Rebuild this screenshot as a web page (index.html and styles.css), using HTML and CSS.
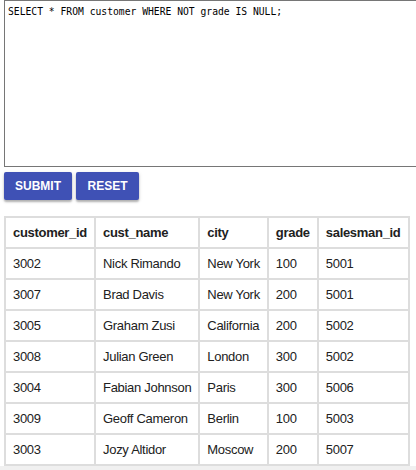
FILE: index.html
```html
<!DOCTYPE html>
<html>
<head>
<meta charset="utf-8">
<link rel="stylesheet" href="styles.css">
</head>
<body>
<div class="page">
  <textarea class="editor" spellcheck="false">SELECT * FROM customer WHERE NOT grade IS NULL;</textarea>
  <div class="actions">
    <button class="btn">SUBMIT</button>
    <button class="btn">RESET</button>
  </div>
  <div class="result">
    <table class="grid">
      <thead>
        <tr><th>customer_id</th><th>cust_name</th><th>city</th><th>grade</th><th>salesman_id</th></tr>
      </thead>
      <tbody>
        <tr><td>3002</td><td>Nick Rimando</td><td>New York</td><td>100</td><td>5001</td></tr>
        <tr><td>3007</td><td>Brad Davis</td><td>New York</td><td>200</td><td>5001</td></tr>
        <tr><td>3005</td><td>Graham Zusi</td><td>California</td><td>200</td><td>5002</td></tr>
        <tr><td>3008</td><td>Julian Green</td><td>London</td><td>300</td><td>5002</td></tr>
        <tr><td>3004</td><td>Fabian Johnson</td><td>Paris</td><td>300</td><td>5006</td></tr>
        <tr><td>3009</td><td>Geoff Cameron</td><td>Berlin</td><td>100</td><td>5003</td></tr>
        <tr><td>3003</td><td>Jozy Altidor</td><td>Moscow</td><td>200</td><td>5007</td></tr>
      </tbody>
    </table>
  </div>
</div>
</body>
</html>
```
FILE: styles.css
```css
html, body {
  margin: 0;
  padding: 0;
  background: #fff;
  overflow: hidden;
}
.page {
  padding: 0 0 0 4px;
  width: 440px;
}
.editor {
  display: block;
  box-sizing: border-box;
  width: 440px;
  height: 167px;
  margin: 0;
  padding: 4px 3px;
  border: 1px solid #767676;
  font-family: "DejaVu Sans Mono", monospace;
  font-size: 9.7px;
  line-height: 14px;
  color: #000;
  resize: none;
  outline: none;
}
.actions {
  display: flex;
  gap: 4px;
  margin-top: 5px;
}
.btn {
  height: 28px;
  padding: 0;
  border: none;
  border-radius: 2px;
  background: #3f51b5;
  color: #fff;
  font-family: "Liberation Sans", Arial, sans-serif;
  font-weight: bold;
  font-size: 12px;
  box-shadow: 0 2px 2px rgba(0,0,0,0.25), 0 1px 4px rgba(0,0,0,0.12);
}
.btn:first-child { width: 68px; }
.btn:last-child { width: 63px; }
.result {
  margin-top: 16px;
  margin-left: -4px;
  padding-left: 4px;
  border-bottom: 4px solid #f0f0f0;
}
.grid {
  border-collapse: separate;
  border-spacing: 0;
  border: 1px solid #ddd;
  font-family: "Liberation Sans", Arial, sans-serif;
  font-size: 13px;
  letter-spacing: -0.3px;
  color: #212121;
}
.grid th, .grid td {
  border: 1px solid #ddd;
  padding: 0 7px;
  text-align: left;
  white-space: nowrap;
}
.grid th {
  height: 29px;
  font-weight: bold;
}
.grid td {
  height: 29px;
}
```
